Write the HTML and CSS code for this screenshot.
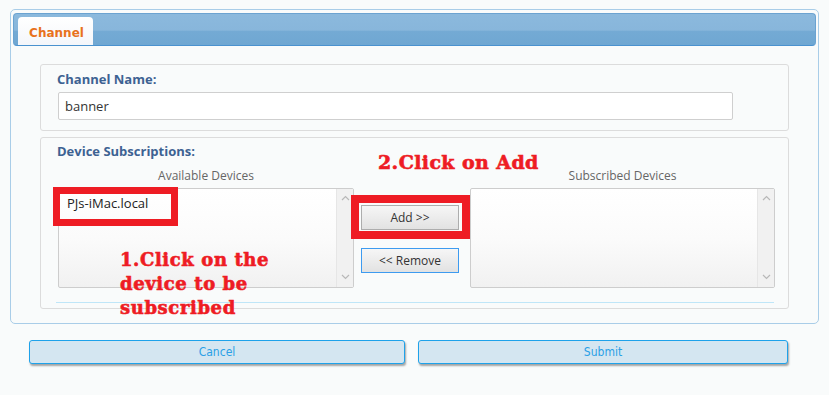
FILE: index.html
```html
<!DOCTYPE html>
<html>
<head>
<meta charset="utf-8">
<link rel="stylesheet" href="styles.css">
</head>
<body>
<div class="outer">
  <div class="header">
    <div class="tab">Channel</div>
  </div>
  <div class="panel panel-name">
    <div class="label">Channel Name:</div>
    <div class="input">banner</div>
  </div>
  <div class="panel panel-devices">
    <div class="label">Device Subscriptions:</div>
    <div class="row">
      <div class="col col-left">
        <div class="caption">Available Devices</div>
        <div class="list">
          <div class="list-body"><div class="item">PJs-iMac.local</div></div>
          <div class="scroll">
            <svg width="9" height="6" viewBox="0 0 9 6"><path d="M1 5 L4.5 1.5 L8 5" fill="none" stroke="#b8b8b8" stroke-width="1.2"/></svg>
            <svg width="9" height="6" viewBox="0 0 9 6"><path d="M1 1 L4.5 4.5 L8 1" fill="none" stroke="#b8b8b8" stroke-width="1.2"/></svg>
          </div>
        </div>
      </div>
      <div class="col col-mid">
        <div class="btn btn-add">Add &gt;&gt;</div>
        <div class="btn btn-remove">&lt;&lt; Remove</div>
      </div>
      <div class="col col-right">
        <div class="caption">Subscribed Devices</div>
        <div class="list">
          <div class="list-body"></div>
          <div class="scroll">
            <svg width="9" height="6" viewBox="0 0 9 6"><path d="M1 5 L4.5 1.5 L8 5" fill="none" stroke="#b8b8b8" stroke-width="1.2"/></svg>
            <svg width="9" height="6" viewBox="0 0 9 6"><path d="M1 1 L4.5 4.5 L8 1" fill="none" stroke="#b8b8b8" stroke-width="1.2"/></svg>
          </div>
        </div>
      </div>
    </div>
    <div class="rule"></div>
    <div class="mark mark-item"></div>
    <div class="mark mark-add"></div>
    <div class="note note-add">2.Click on Add</div>
    <div class="note note-device">1.Click on the<br>device to be<br>subscribed</div>
  </div>
</div>
<div class="footer">
  <div class="fbtn fbtn-cancel">Cancel</div>
  <div class="fbtn fbtn-submit">Submit</div>
</div>
</body>
</html>
```

FILE: styles.css
```css
* { box-sizing: border-box; }
html, body { margin: 0; padding: 0; }
body {
  background: #f9fbfb;
  font-family: "Open Sans", "DejaVu Sans", sans-serif;
  width: 829px;
  height: 395px;
  overflow: hidden;
}
.outer {
  margin: 9px 10px 0 10px;
  height: 315px;
  border: 1px solid #a9cde8;
  border-radius: 5px;
  padding: 3px 2px 0 2px;
}
.header {
  height: 33px;
  border-radius: 4px;
  border: 1px solid #6ba3d1;
  border-bottom: 1px solid #4a92cf;
  background: linear-gradient(to bottom, #8bb9dd 0%, #88b6db 52%, #74aad4 56%, #6fa7d2 100%);
  padding: 4px 0 0 4px;
  display: flex;
  align-items: flex-end;
}
.tab {
  width: 75px;
  height: 28px;
  background: linear-gradient(to bottom, #ffffff, #f4f6fa);
  border-radius: 4px 4px 0 0;
  color: #e8721c;
  font-family: "DejaVu Sans", sans-serif;
  font-weight: bold;
  font-size: 12px;
  display: flex;
  align-items: center;
  justify-content: center;
  padding: 4px 0 0 2px;
}
.panel {
  margin: 0 27px;
  border: 1px solid #dcdcdc;
  border-radius: 3px;
  background: #f9fbfb;
  padding: 5px 16px 0 16px;
  position: relative;
}
.panel-name {
  margin-top: 18px;
  height: 67px;
}
.panel-devices {
  margin-top: 6px;
  height: 172px;
  padding: 4px 14px 0 15px;
}
.panel-devices .label { padding-left: 1px; }
.label {
  font-weight: bold;
  font-size: 13px;
  line-height: 18px;
  color: #3d6292;
}
.input {
  margin: 4px 0 0 1px;
  width: 675px;
  height: 28px;
  border: 1px solid #cfcfcf;
  border-radius: 2px;
  background: #fff;
  font-size: 13px;
  color: #333;
  padding: 4px 0 0 6px;
  line-height: 18px;
}
.row {
  display: flex;
  margin-top: 7px;
}
.col { flex-shrink: 0; }
.col-left { width: 296px; margin-left: 2px; }
.col-mid {
  width: 98px;
  margin-left: 7px;
  padding-top: 38px;
  display: flex;
  flex-direction: column;
  gap: 18px;
}
.col-right { width: 305px; margin-left: 11px; }
.caption {
  text-align: center;
  font-size: 12px;
  line-height: 17px;
  color: #666;
  margin-bottom: 4px;
}
.list {
  height: 100px;
  border: 1px solid #cdcdcd;
  border-radius: 2px;
  background: linear-gradient(to bottom, #ffffff 0%, #fbfbfb 50%, #f1f1f1 100%);
  display: flex;
}
.list-body { flex: 1; padding: 5px 0 0 8px; }
.item { font-size: 13px; color: #222; line-height: 18px; }
.scroll {
  width: 17px;
  border-left: 1px solid #e6e6e6;
  background: #f1f1f1;
  display: flex;
  flex-direction: column;
  justify-content: space-between;
  align-items: center;
  padding: 6px 0 7px 0;
}
.scroll svg { display: block; }
.btn {
  width: 98px;
  height: 25px;
  font-size: 12px;
  color: #333;
  display: flex;
  align-items: center;
  justify-content: center;
  background: linear-gradient(to bottom, #f6f6f6, #e2e2e2);
}
.btn-add { border: 1px solid #adadad; }
.btn-remove { border: 1px solid #3d9bf0; }
.rule {
  margin-top: 14px;
  height: 1px;
  background: #bfe6f8;
}
.mark {
  position: absolute;
  border: 8px solid #ee1c24;
}
.mark-item { left: 12px; top: 49px; width: 125px; height: 39px; border-width: 7px; }
.mark-add { left: 310px; top: 57px; width: 119px; height: 44px; }
.note {
  position: absolute;
  color: #ee1c24;
  font-family: "DejaVu Serif", serif;
  font-weight: bold;
  -webkit-text-stroke: 0.6px #ee1c24;
  white-space: nowrap;
}
.note-add { left: 337px; top: 12px; font-size: 19px; line-height: 24px; letter-spacing: 0.4px; }
.note-device { left: 79px; top: 110px; font-size: 18px; line-height: 24px; letter-spacing: 0.6px; }
.footer {
  display: flex;
  margin: 16px 0 0 29px;
  gap: 13px;
}
.fbtn {
  height: 24px;
  border: 1px solid #1ea2ea;
  border-radius: 3px;
  background: #d4e6f1;
  box-shadow: 1px 2px 2px rgba(0,0,0,0.35);
  color: #2aa0e6;
  font-family: "DejaVu Sans Condensed", "DejaVu Sans", sans-serif;
  font-stretch: condensed;
  font-size: 12px;
  display: flex;
  align-items: center;
  justify-content: center;
}
.fbtn-cancel { width: 376px; }
.fbtn-submit { width: 370px; }
```
